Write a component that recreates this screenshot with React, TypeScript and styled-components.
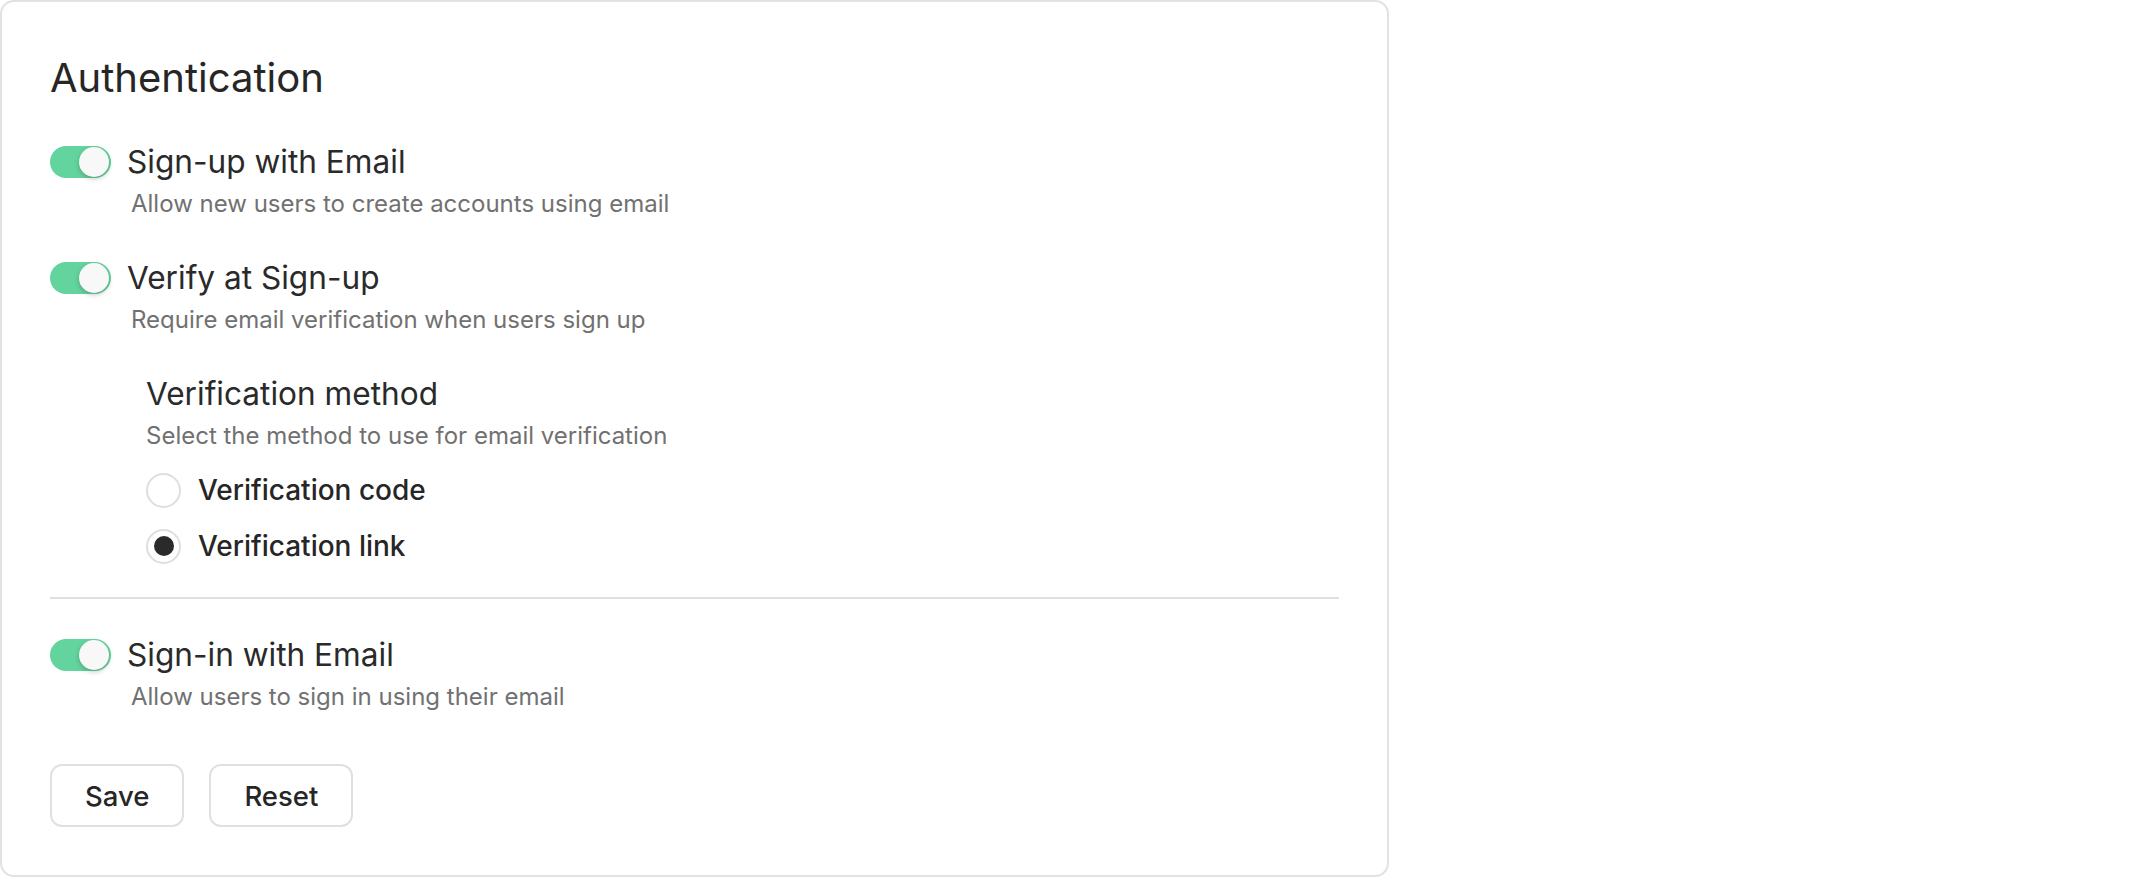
import React, { useState } from "react";
import styled, { createGlobalStyle } from "styled-components";

const GlobalStyle = createGlobalStyle`
  html, body {
    margin: 0;
    padding: 0;
    background: #ffffff;
  }
  body {
    font-family: Inter, "Noto Sans", "Liberation Sans", sans-serif;
    color: #2a2a2a;
  }
`;

const Card = styled.section`
  box-sizing: border-box;
  width: 1389px;
  min-height: 877px;
  padding: 52px 48px 48px;
  background: #ffffff;
  border: 2px solid #e2e2e2;
  border-radius: 14px;
  display: flex;
  flex-direction: column;
`;

const Title = styled.h2`
  margin: 0 0 40px;
  font-size: 40px;
  line-height: 48px;
  font-weight: 400;
  color: #262626;
`;

const Setting = styled.div<{ spaced?: boolean }>`
  display: flex;
  flex-direction: column;
  gap: 6px;
  margin-bottom: ${(p) => (p.spaced ? "38px" : "0")};
`;

const SettingRow = styled.label`
  display: flex;
  align-items: center;
  gap: 16px;
  cursor: pointer;
`;

const Track = styled.button<{ on: boolean }>`
  position: relative;
  flex: none;
  width: 61px;
  height: 32px;
  padding: 0;
  border: none;
  border-radius: 16px;
  background: ${(p) => (p.on ? "#63d49e" : "#d9d9d9")};
  cursor: pointer;
`;

const Knob = styled.span<{ on: boolean }>`
  position: absolute;
  top: 1px;
  left: ${(p) => (p.on ? "29px" : "2px")};
  width: 30px;
  height: 30px;
  border-radius: 50%;
  background: #f8f8f8;
  box-shadow: 0 2px 5px rgba(0, 0, 0, 0.22);
  transition: left 0.2s ease;
`;

const Label = styled.span`
  font-size: 31.6px;
  line-height: 40px;
  font-weight: 400;
  color: #2a2a2a;
`;

const Hint = styled.p<{ indent: number }>`
  margin: 0;
  padding-left: ${(p) => p.indent}px;
  font-size: 24px;
  line-height: 32px;
  color: #717171;
`;

const SubSection = styled.div`
  display: flex;
  flex-direction: column;
  padding-left: 96px;
  margin-bottom: 31px;
`;

const SubHeading = styled.h3`
  margin: 0 0 6px;
  font-size: 31.6px;
  line-height: 40px;
  font-weight: 400;
  color: #2a2a2a;
`;

const RadioList = styled.div`
  display: flex;
  flex-direction: column;
  gap: 16px;
  margin-top: 18px;
`;

const RadioRow = styled.label`
  display: flex;
  align-items: center;
  gap: 17px;
  height: 40px;
  cursor: pointer;
`;

const RadioDot = styled.span<{ checked: boolean }>`
  box-sizing: border-box;
  flex: none;
  width: 35px;
  height: 35px;
  border-radius: 50%;
  border: 2px solid #dedede;
  display: flex;
  align-items: center;
  justify-content: center;

  &::after {
    content: "";
    width: 20px;
    height: 20px;
    border-radius: 50%;
    background: #2a2a2a;
    display: ${(p) => (p.checked ? "block" : "none")};
  }
`;

const RadioText = styled.span`
  font-size: 28px;
  line-height: 40px;
  font-weight: 500;
  color: #262626;
`;

const Divider = styled.hr`
  margin: 0 0 36px;
  border: none;
  height: 2px;
  background: #e0e0e0;
`;

const Actions = styled.div`
  display: flex;
  gap: 25px;
  margin-top: 51px;
`;

const Button = styled.button`
  box-sizing: border-box;
  height: 63px;
  padding: 0 33px;
  background: #ffffff;
  border: 2px solid #e0e0e0;
  border-radius: 12px;
  font-family: inherit;
  font-size: 27.5px;
  font-weight: 500;
  color: #262626;
  cursor: pointer;
`;

type Method = "code" | "link";

const Toggle: React.FC<{ on: boolean; onChange: (v: boolean) => void }> = ({ on, onChange }) => (
  <Track type="button" on={on} onClick={() => onChange(!on)} aria-pressed={on}>
    <Knob on={on} />
  </Track>
);

const App: React.FC = () => {
  const [signUp, setSignUp] = useState(true);
  const [verify, setVerify] = useState(true);
  const [signIn, setSignIn] = useState(true);
  const [method, setMethod] = useState<Method>("link");

  const reset = () => {
    setSignUp(true);
    setVerify(true);
    setSignIn(true);
    setMethod("link");
  };

  return (
    <>
      <GlobalStyle />
      <Card>
        <Title>Authentication</Title>

        <Setting spaced>
          <SettingRow>
            <Toggle on={signUp} onChange={setSignUp} />
            <Label>Sign-up with Email</Label>
          </SettingRow>
          <Hint indent={81}>Allow new users to create accounts using email</Hint>
        </Setting>

        <Setting spaced>
          <SettingRow>
            <Toggle on={verify} onChange={setVerify} />
            <Label>Verify at Sign-up</Label>
          </SettingRow>
          <Hint indent={81}>Require email verification when users sign up</Hint>
        </Setting>

        {verify && (
          <SubSection>
            <SubHeading>Verification method</SubHeading>
            <Hint indent={0}>Select the method to use for email verification</Hint>
            <RadioList>
              <RadioRow onClick={() => setMethod("code")}>
                <RadioDot checked={method === "code"} />
                <RadioText>Verification code</RadioText>
              </RadioRow>
              <RadioRow onClick={() => setMethod("link")}>
                <RadioDot checked={method === "link"} />
                <RadioText>Verification link</RadioText>
              </RadioRow>
            </RadioList>
          </SubSection>
        )}

        <Divider />

        <Setting>
          <SettingRow>
            <Toggle on={signIn} onChange={setSignIn} />
            <Label>Sign-in with Email</Label>
          </SettingRow>
          <Hint indent={81}>Allow users to sign in using their email</Hint>
        </Setting>

        <Actions>
          <Button type="button">Save</Button>
          <Button type="button" onClick={reset}>Reset</Button>
        </Actions>
      </Card>
    </>
  );
};

export default App;
